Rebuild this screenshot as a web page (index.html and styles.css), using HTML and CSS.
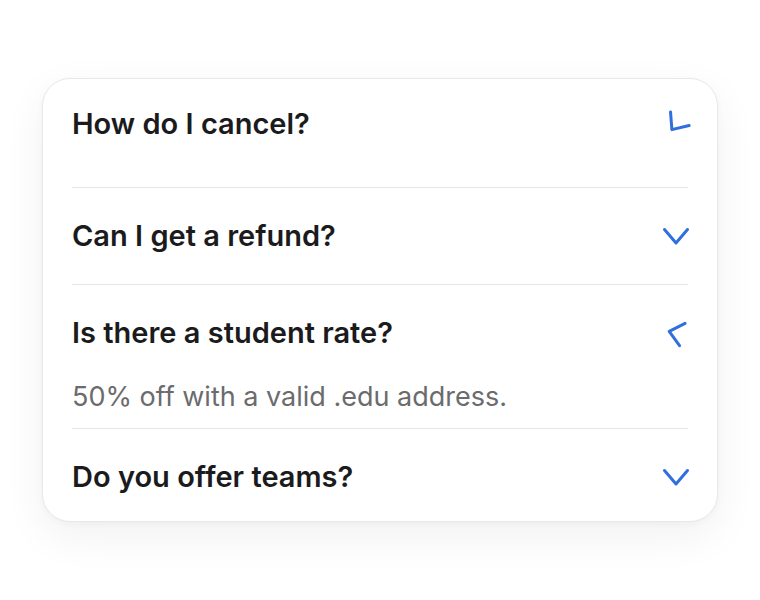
FILE: index.html
```html
<!DOCTYPE html>
<html lang="en">
<head>
<meta charset="utf-8">
<title>FAQ</title>
<link rel="stylesheet" href="styles.css">
</head>
<body>
<div class="card">
  <div class="item closing">
    <div class="q">
      <span class="q-text">How do I cancel?</span>
      <svg class="chev rot-closing" width="28" height="28" viewBox="0 0 28 28" aria-hidden="true"><polyline points="2.5,7.5 14,21 25.5,7.5"/></svg>
    </div>
    <div class="a-space"></div>
  </div>
  <div class="item">
    <div class="q">
      <span class="q-text">Can I get a refund?</span>
      <svg class="chev" width="28" height="28" viewBox="0 0 28 28" aria-hidden="true"><polyline points="2.5,7.5 14,21 25.5,7.5"/></svg>
    </div>
  </div>
  <div class="item open">
    <div class="q">
      <span class="q-text">Is there a student rate?</span>
      <svg class="chev rot-open" width="28" height="28" viewBox="0 0 28 28" aria-hidden="true"><polyline points="2.5,7.5 14,21 25.5,7.5"/></svg>
    </div>
    <p class="a">50% off with a valid .edu address.</p>
  </div>
  <div class="item last">
    <div class="q">
      <span class="q-text">Do you offer teams?</span>
      <svg class="chev" width="28" height="28" viewBox="0 0 28 28" aria-hidden="true"><polyline points="2.5,7.5 14,21 25.5,7.5"/></svg>
    </div>
  </div>
</div>
</body>
</html>
```
FILE: styles.css
```css
html, body {
  margin: 0;
  padding: 0;
  background: #ffffff;
}
body {
  min-height: 100vh;
  box-sizing: border-box;
  padding-bottom: 1px;
  display: flex;
  align-items: center;
  justify-content: center;
  font-family: Inter, "Liberation Sans", sans-serif;
}
.card {
  width: 616px;
  padding: 0 29px;
  background: #ffffff;
  border: 1px solid #e8e8e8;
  border-radius: 28px;
  box-shadow: 0 14px 44px rgba(0, 0, 0, 0.06), 0 2px 6px rgba(0, 0, 0, 0.03);
}
.item {
  border-bottom: 1px solid #e6e6e6;
}
.item.last {
  border-bottom: none;
}
.q {
  display: flex;
  align-items: center;
  justify-content: space-between;
  padding: 28px 0;
  line-height: 40px;
}
.closing .q {
  padding: 25px 0 28px;
}
.open .q {
  padding: 28px 0 0;
}
.last .q {
  padding: 28px 0 24px;
}
.q-text {
  font-size: 29px;
  font-weight: 600;
  color: #1b1b1d;
}
.chev {
  display: block;
  margin-right: -2px;
  fill: none;
  stroke: #2f6fdf;
  stroke-width: 3;
  stroke-linecap: round;
  stroke-linejoin: round;
}
.rot-closing {
  transform: rotate(36deg);
}
.rot-open {
  transform: rotate(104deg);
}
.a-space {
  height: 15px;
}
.a {
  margin: 0;
  padding: 26px 0 13px;
  font-size: 27px;
  line-height: 36px;
  color: #6b6b6d;
}
```
